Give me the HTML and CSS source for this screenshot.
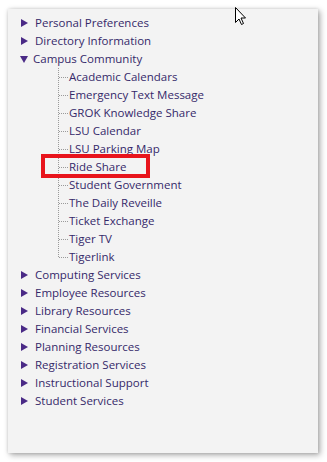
FILE: index.html
```html
<!DOCTYPE html>
<html>
<head>
<meta charset="utf-8">
<link rel="stylesheet" href="styles.css">
</head>
<body>
<div class="panel">
  <ul class="tree">
    <li class="node"><div class="row"><span class="arrow right"></span><span class="label">Personal Preferences</span></div></li>
    <li class="node"><div class="row"><span class="arrow right"></span><span class="label">Directory Information</span></div></li>
    <li class="node open"><div class="row"><span class="arrow down"></span><span class="label">Campus Community</span></div>
      <ul class="children">
        <li class="leaf">Academic Calendars</li>
        <li class="leaf">Emergency Text Message</li>
        <li class="leaf">GROK Knowledge Share</li>
        <li class="leaf">LSU Calendar</li>
        <li class="leaf">LSU Parking Map</li>
        <li class="leaf">Ride Share</li>
        <li class="leaf">Student Government</li>
        <li class="leaf">The Daily Reveille</li>
        <li class="leaf">Ticket Exchange</li>
        <li class="leaf">Tiger TV</li>
        <li class="leaf">Tigerlink</li>
      </ul>
    </li>
    <li class="node"><div class="row"><span class="arrow right"></span><span class="label">Computing Services</span></div></li>
    <li class="node"><div class="row"><span class="arrow right"></span><span class="label">Employee Resources</span></div></li>
    <li class="node"><div class="row"><span class="arrow right"></span><span class="label">Library Resources</span></div></li>
    <li class="node"><div class="row"><span class="arrow right"></span><span class="label">Financial Services</span></div></li>
    <li class="node"><div class="row"><span class="arrow right"></span><span class="label">Planning Resources</span></div></li>
    <li class="node"><div class="row"><span class="arrow right"></span><span class="label">Registration Services</span></div></li>
    <li class="node"><div class="row"><span class="arrow right"></span><span class="label">Instructional Support</span></div></li>
    <li class="node"><div class="row"><span class="arrow right"></span><span class="label">Student Services</span></div></li>
  </ul>
  <div class="highlight"></div>
</div>
<svg class="cursor" width="12" height="19" viewBox="0 0 12 19">
  <path d="M0.5 0.5 L0.5 15.5 L4 12 L6.5 17.5 L8.5 16.5 L6 11 L10.5 11 Z" fill="#fff" stroke="#000" stroke-width="1" stroke-linejoin="miter"/>
</svg>
</body>
</html>
```
FILE: styles.css
```css
html, body {
  margin: 0;
  padding: 0;
  background: #ffffff;
}
body {
  position: relative;
  width: 327px;
  height: 462px;
  overflow: hidden;
  font-family: "Open Sans", "Noto Sans", sans-serif;
  font-size: 11.5px;
  color: #35296a;
}
.panel {
  position: relative;
  margin: 9px 0 0 8px;
  width: 310px;
  height: 444px;
  background: #f3f3f3;
  box-shadow: 2px 2px 6px rgba(0, 0, 0, 0.35), 0 0 3px rgba(0, 0, 0, 0.12);
}
.tree {
  list-style: none;
  margin: 0;
  padding: 5px 0 0 13px;
}
.node {
  margin: 0;
}
.row {
  display: flex;
  align-items: center;
  height: 18px;
}
.arrow {
  flex: none;
  width: 0;
  height: 0;
  margin-right: 7px;
}
.arrow.right {
  border-top: 4.5px solid transparent;
  border-bottom: 4.5px solid transparent;
  border-left: 7px solid #4a2a86;
}
.arrow.down {
  border-left: 4.5px solid transparent;
  border-right: 4.5px solid transparent;
  border-top: 7px solid #4a2a86;
  margin-right: 5px;
  margin-left: -1px;
}
.label {
  line-height: 18px;
  white-space: nowrap;
}
.children {
  list-style: none;
  margin: 0;
  padding: 0 0 0 37px;
}
.leaf {
  height: 18px;
  line-height: 18px;
  white-space: nowrap;
  padding-left: 11px;
  background-image:
    repeating-linear-gradient(to bottom, #9a9a9a 0 1px, transparent 1px 2px),
    repeating-linear-gradient(to right, #9a9a9a 0 1px, transparent 1px 2px);
  background-repeat: no-repeat;
  background-size: 1px 100%, 9px 1px;
  background-position: 0 0, 1px 9px;
}
.leaf:last-child {
  background-size: 1px 10px, 9px 1px;
}
.highlight {
  position: absolute;
  left: 33px;
  top: 145px;
  width: 101px;
  height: 16px;
  border: 4px solid #e8141c;
}
.cursor {
  position: absolute;
  left: 235px;
  top: 7px;
}
```
